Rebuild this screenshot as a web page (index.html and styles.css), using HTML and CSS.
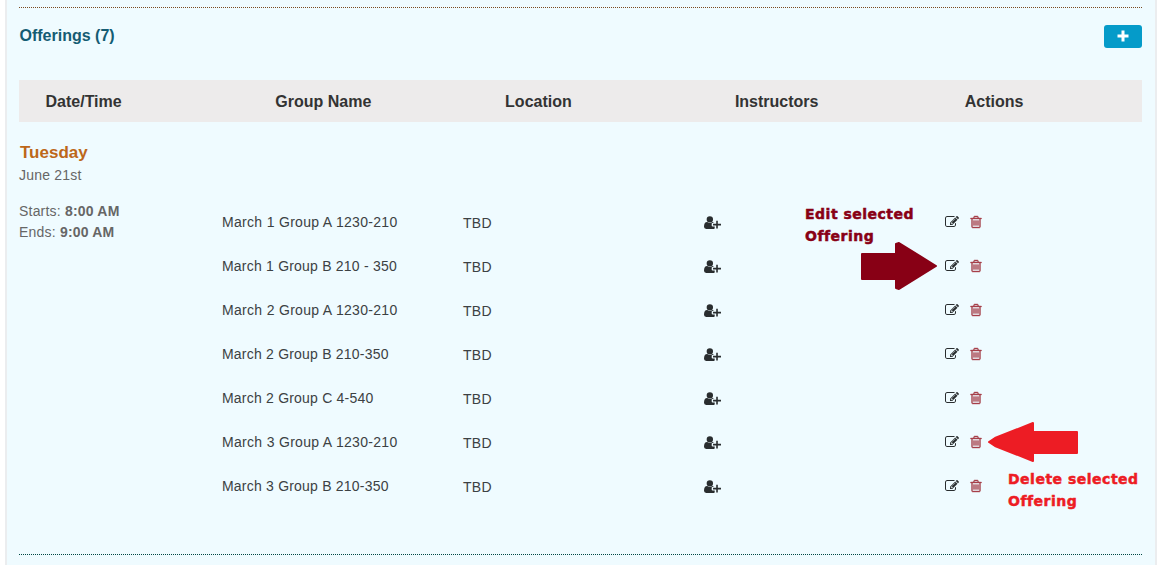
FILE: index.html
```html
<!DOCTYPE html>
<html lang="en">
<head>
<meta charset="utf-8">
<title>Offerings</title>
<link rel="stylesheet" href="styles.css">
</head>
<body>
<svg class="sprite" width="0" height="0">
  <symbol id="user-plus" viewBox="0 0 2048 1792"><path d="M704 896a384 384 0 1 0 0-768a384 384 0 0 0 0 768zM1664 1056h384v192h-384v384h-192v-384h-384v-192h384v-384h192zM928 1280q0 100 110 100h250v240q-50 44-107 44H267Q0 1664 0 1405Q0 832 365 832q20 0 42 18q120 110 297 110t297-110q22-18 42-18q90 0 150 84h-105q-130 0-160 110z"/></symbol>
  <symbol id="edit" viewBox="0 0 1792 1792"><path d="M888 1184l116-116-152-152-116 116v56h96v96h56zm440-720q-16-16-33 1l-350 350q-17 17-1 33t33-1l350-350q17-17 1-33zm80 594v190q0 119-84.500 203.500t-203.500 84.500h-832q-119 0-203.500-84.500t-84.500-203.500v-832q0-119 84.500-203.500t203.500-84.500h832q63 0 117 25 15 7 18 23 3 17-9 29l-49 49q-14 14-32 8-23-6-45-6h-832q-66 0-113 47t-47 113v832q0 66 47 113t113 47h832q66 0 113-47t47-113v-126q0-13 9-22l64-64q15-15 35-7t20 29zm-96-738l288 288-672 672h-288v-288zm444 132l-92 92-288-288 92-92q28-28 68-28t68 28l152 152q28 28 28 68t-28 68z"/></symbol>
  <symbol id="trash" viewBox="0 0 1792 1792"><path d="M704 736v576q0 14-9 23t-23 9h-64q-14 0-23-9t-9-23v-576q0-14 9-23t23-9h64q14 0 23 9t9 23zm256 0v576q0 14-9 23t-23 9h-64q-14 0-23-9t-9-23v-576q0-14 9-23t23-9h64q14 0 23 9t9 23zm256 0v576q0 14-9 23t-23 9h-64q-14 0-23-9t-9-23v-576q0-14 9-23t23-9h64q14 0 23 9t9 23zm128 724v-948h-896v948q0 22 7 40.500t14.500 27 10.500 8.500h832q3 0 10.500-8.500t14.500-27 7-40.500zm-672-1076h448l-48-117q-7-9-17-11h-317q-10 2-17 11zm928 32v64q0 14-9 23t-23 9h-96v948q0 83-47 143.500t-113 60.500h-832q-66 0-113-58.500t-47-141.500v-952h-96q-14 0-23-9t-9-23v-64q0-14 9-23t23-9h309l70-167q15-37 54-63t79-26h320q40 0 79 26t54 63l70 167h309q14 0 23 9t9 23z"/></symbol>
</svg>
<main class="panel">
  <section class="offerings">
    <header class="title-bar">
      <h2 class="title">Offerings (7)</h2>
      <button class="add" aria-label="Add offering"><svg class="plus" viewBox="0 0 12 12"><path d="M4.500.5h3v4h4v3h-4v4h-3v-4h-4v-3h4z"/></svg></button>
    </header>
    <div class="columns">
      <span>Date/Time</span><span>Group Name</span><span>Location</span><span>Instructors</span><span>Actions</span>
    </div>
    <div class="body">
      <div class="date">
        <h3 class="day">Tuesday</h3>
        <p class="month">June 21st</p>
        <p class="time">Starts: <b>8:00 AM</b></p>
        <p class="time">Ends: <b>9:00 AM</b></p>
      </div>
      <div class="rows">
        <div class="row"><span>March 1 Group A 1230-210</span><span class="place">TBD</span><svg class="user"><use href="#user-plus"/></svg><span class="actions"><svg class="icon"><use href="#edit"/></svg><svg class="icon trash"><use href="#trash"/></svg></span></div>
        <div class="row"><span class="tight">March 1 Group B 210 - 350</span><span class="place">TBD</span><svg class="user"><use href="#user-plus"/></svg><span class="actions"><svg class="icon"><use href="#edit"/></svg><svg class="icon trash"><use href="#trash"/></svg></span></div>
        <div class="row"><span>March 2 Group A 1230-210</span><span class="place">TBD</span><svg class="user"><use href="#user-plus"/></svg><span class="actions"><svg class="icon"><use href="#edit"/></svg><svg class="icon trash"><use href="#trash"/></svg></span></div>
        <div class="row"><span class="tight">March 2 Group B 210-350</span><span class="place">TBD</span><svg class="user"><use href="#user-plus"/></svg><span class="actions"><svg class="icon"><use href="#edit"/></svg><svg class="icon trash"><use href="#trash"/></svg></span></div>
        <div class="row"><span class="tight">March 2 Group C 4-540</span><span class="place">TBD</span><svg class="user"><use href="#user-plus"/></svg><span class="actions"><svg class="icon"><use href="#edit"/></svg><svg class="icon trash"><use href="#trash"/></svg></span></div>
        <div class="row"><span>March 3 Group A 1230-210</span><span class="place">TBD</span><svg class="user"><use href="#user-plus"/></svg><span class="actions"><svg class="icon"><use href="#edit"/></svg><svg class="icon trash"><use href="#trash"/></svg></span></div>
        <div class="row"><span class="tight">March 3 Group B 210-350</span><span class="place">TBD</span><svg class="user"><use href="#user-plus"/></svg><span class="actions"><svg class="icon"><use href="#edit"/></svg><svg class="icon trash"><use href="#trash"/></svg></span></div>
      </div>
    </div>
  </section>
</main>
<div class="note note-edit">Edit selected<br>Offering</div>
<svg class="arrow arrow-edit" viewBox="0 0 78 50"><path d="M2 13H36V3L39 2L76 25L39 48L36 47V38H2z"/></svg>
<svg class="arrow arrow-delete" viewBox="0 0 92 42"><path d="M2 21L8 17L46 2V11H90V32H46V40L8 25z"/></svg>
<div class="note note-delete">Delete selected<br>Offering</div>
</body>
</html>
```

FILE: styles.css
```css
* { box-sizing: border-box; }
body {
  margin: 0;
  height: 565px;
  overflow: hidden;
  position: relative;
  background: #fff;
  color: #333;
  font-family: "Liberation Sans", Arial, sans-serif;
}
h2, h3, p { margin: 0; }
svg { display: block; fill: currentColor; }
.sprite { position: absolute; }
.panel {
  width: 1152px;
  height: 565px;
  margin-left: 5px;
  padding: 7px 13px 0 12px;
  border: solid #ebedef;
  border-width: 0 2px;
  background: #effbff;
}
.offerings {
  height: 548px;
  border-top: 1px dotted #7a4a20;
  border-bottom: 1px dotted #004844;
}
.title-bar {
  display: flex;
  justify-content: space-between;
  height: 72px;
  padding-top: 17px;
}
.title { padding: 1px 0 0 .5px; font-size: 16px; line-height: 20px; color: #145c73; }
.add {
  display: flex;
  align-items: center;
  justify-content: center;
  width: 38px;
  height: 23px;
  padding: 0 0 1px;
  border: 0;
  border-radius: 3px;
  background: #059bc9;
  color: #fff;
}
.plus { width: 12px; height: 12px; }
.columns {
  display: grid;
  grid-template-columns: repeat(5, 229.8px);
  height: 42px;
  padding-left: 26.500px;
  overflow: hidden;
  background: #edebeb;
  font-size: 16px;
  font-weight: bold;
  line-height: 43px;
}
.body { display: flex; }
.date {
  width: 203px;
  padding-top: 20px;
  color: #666;
  font-size: 14px;
  line-height: 21px;
  letter-spacing: .2px;
}
.day { padding: 0 0 1px 1px; font-size: 17px; line-height: 22px; letter-spacing: 0; color: #bd6719; }
.month { margin-bottom: 15px; }
.rows { padding-top: 78px; }
.row {
  display: grid;
  grid-template-columns: 241px 241px 241px 60px;
  align-items: center;
  height: 44px;
  color: #3c4143;
  font-size: 14px;
  letter-spacing: .31px;
}
.tight { letter-spacing: .21px; }
.place { padding-top: 2px; }
.user { width: 17px; height: 15px; color: #292d2f; }
.actions { display: flex; gap: 10px; }
.icon { width: 14px; height: 14px; color: #292d2f; }
.icon.trash { color: #a6404b; stroke: currentColor; stroke-width: 50; }
.note {
  position: absolute;
  font: bold 14px/22px "DejaVu Sans", sans-serif;
  letter-spacing: .5px;
  -webkit-text-stroke: .5px currentColor;
  white-space: nowrap;
}
.note-edit { left: 805px; top: 203px; color: #880015; }
.note-delete { left: 1008px; top: 468px; color: #ed1c24; }
.arrow { position: absolute; stroke: currentColor; stroke-width: 2; stroke-linejoin: round; }
.arrow-edit { left: 860px; top: 241px; width: 78px; height: 50px; color: #880015; }
.arrow-delete { left: 987px; top: 421px; width: 92px; height: 42px; color: #ed1c24; }
```
